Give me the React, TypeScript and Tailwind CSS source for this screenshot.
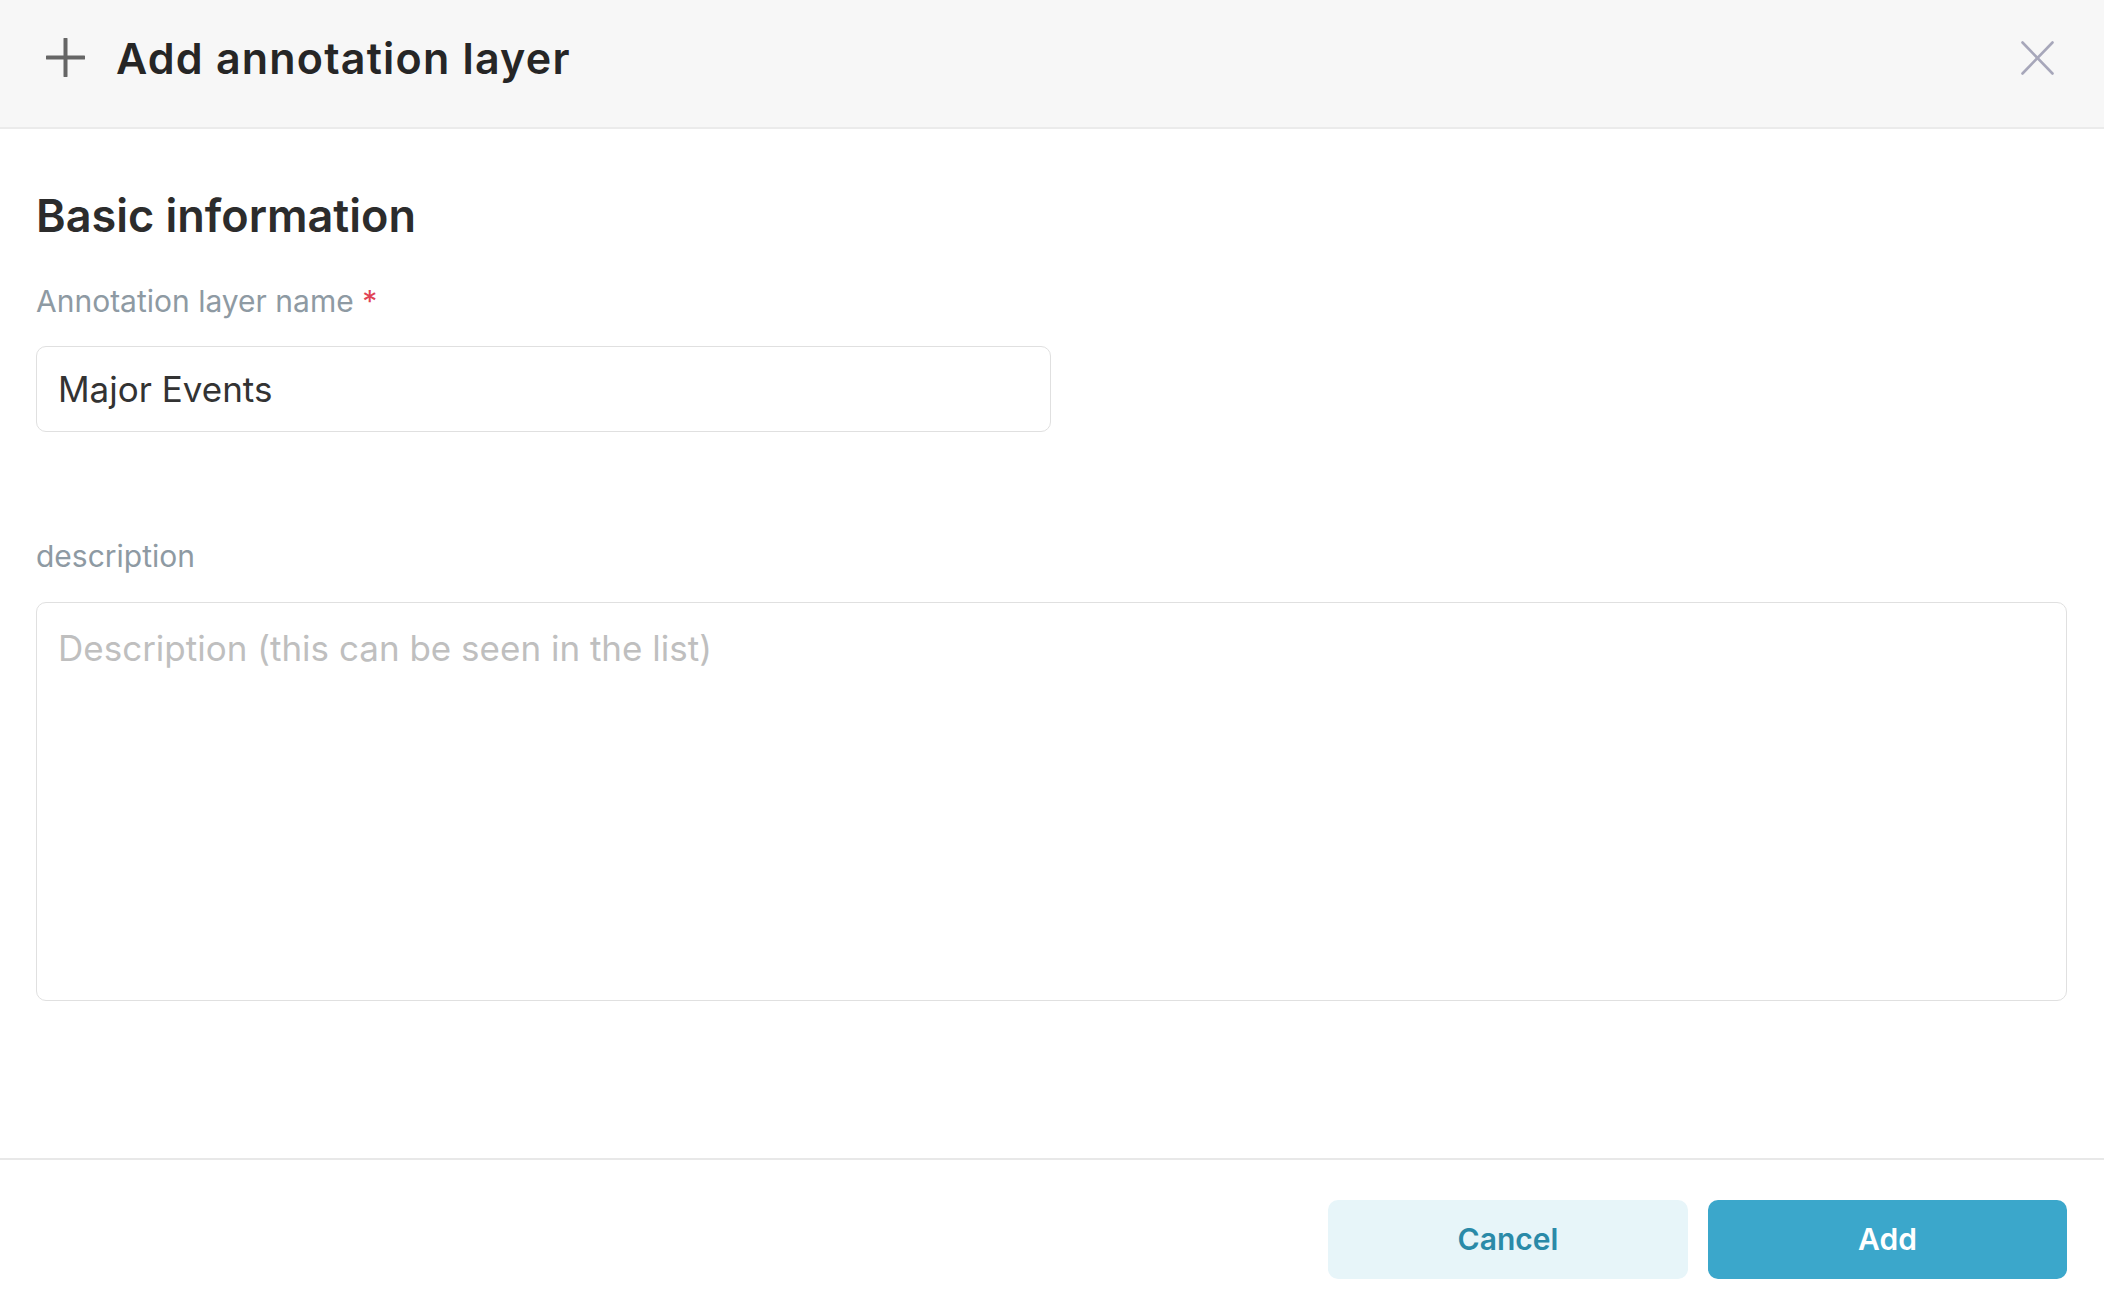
import React from "react";

export default function App() {
  return (
    <div className="w-[2104px] h-[1316px] bg-white flex flex-col font-['Inter','Liberation_Sans',sans-serif] overflow-hidden">
      {/* Header */}
      <div className="h-[129px] shrink-0 bg-[#f7f7f7] border-b-2 border-[#ebebeb] flex items-center pl-[46px] pr-[50px] pb-[12px]">
        <svg width="39" height="39" viewBox="0 0 39 39" className="shrink-0">
          <line x1="19.5" y1="1" x2="19.5" y2="38" stroke="#666666" strokeWidth="4" strokeLinecap="round" />
          <line x1="1" y1="19.5" x2="38" y2="19.5" stroke="#666666" strokeWidth="4" strokeLinecap="round" />
        </svg>
        <div className="ml-[31px] text-[43px] leading-[52px] font-semibold text-[#262626] tracking-[1.2px]">
          Add annotation layer
        </div>
        <div className="ml-auto">
          <svg width="33" height="34" viewBox="0 0 33 34">
            <line x1="1.5" y1="1.5" x2="31.5" y2="32.5" stroke="#a7a7ba" strokeWidth="2.6" strokeLinecap="round" />
            <line x1="31.5" y1="1.5" x2="1.5" y2="32.5" stroke="#a7a7ba" strokeWidth="2.6" strokeLinecap="round" />
          </svg>
        </div>
      </div>

      {/* Body */}
      <div className="flex-1 flex flex-col px-[36px]">
        <div className="mt-[60px] text-[45px] leading-[53px] font-semibold text-[#2c2c2c]">
          Basic information
        </div>
        <div className="mt-[41px] text-[30px] leading-[36px] text-[#8e9aa3]">
          Annotation layer name <span className="text-[#e04355]">*</span>
        </div>
        <div className="mt-[27px] w-[1015px] h-[86px] border border-[#e0e0e0] rounded-[10px] flex items-center px-[21px] text-[35px] text-[#333333]">
          Major Events
        </div>
        <div className="mt-[106px] text-[30px] leading-[36px] text-[#8e9aa3]">description</div>
        <div className="mt-[28px] w-[2031px] h-[399px] border border-[#e0e0e0] rounded-[10px] px-[21px] pt-[20px] text-[35px] leading-[51px] text-[#bfbfbf]">
          Description (this can be seen in the list)
        </div>
      </div>

      {/* Footer */}
      <div className="h-[158px] shrink-0 border-t-2 border-[#e8e8e8] flex items-start justify-end pr-[37px] pt-[40px] gap-[20px]">
        <button className="w-[360px] h-[79px] rounded-[10px] bg-[#e7f5f9] text-[#2a8aa8] text-[30px] font-semibold">
          Cancel
        </button>
        <button className="w-[359px] h-[79px] rounded-[10px] bg-[#3ba7cb] text-white text-[30px] font-semibold">
          Add
        </button>
      </div>
    </div>
  );
}
